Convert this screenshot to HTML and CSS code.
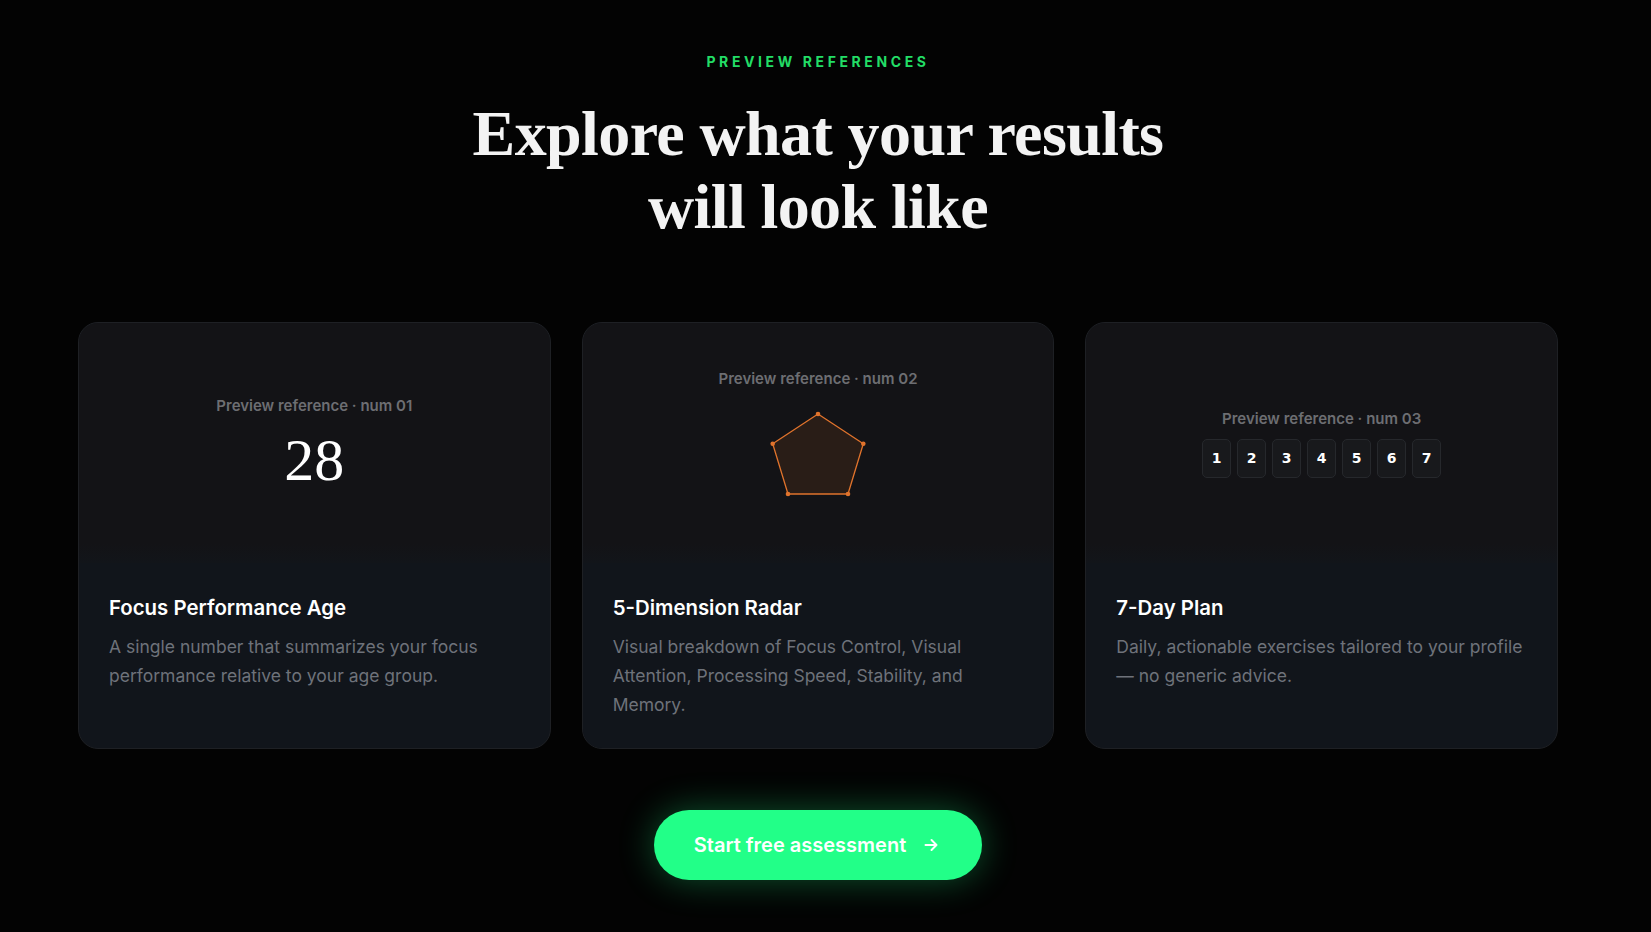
FILE: index.html
```html
<!DOCTYPE html>
<html lang="en">
<head>
<meta charset="utf-8">
<title>Preview references</title>
<link rel="stylesheet" href="styles.css">
</head>
<body>
<main class="page">
  <section class="previews">
    <p class="eyebrow">PREVIEW REFERENCES</p>
    <h1 class="headline">Explore what your results<br>will look like</h1>

    <div class="cards">
      <article class="card">
        <div class="visual">
          <p class="ref-label">Preview reference · num 01</p>
          <div class="big-number">28</div>
        </div>
        <div class="body">
          <h2 class="card-title">Focus Performance Age</h2>
          <p class="card-text">A single number that summarizes your focus performance relative to your age group.</p>
        </div>
      </article>

      <article class="card">
        <div class="visual">
          <p class="ref-label">Preview reference · num 02</p>
          <svg class="radar" width="120" height="120" viewBox="0 0 120 120" aria-hidden="true">
            <polygon points="60,17 105.3,46.7 90,97 30,97 14.7,46.7" fill="rgba(234,120,40,0.10)" stroke="#e0732c" stroke-width="1.3" stroke-linejoin="round"/>
            <circle cx="60" cy="17" r="2.3" fill="#e0732c"/>
            <circle cx="105.3" cy="46.7" r="2.3" fill="#e0732c"/>
            <circle cx="90" cy="97" r="2.3" fill="#e0732c"/>
            <circle cx="30" cy="97" r="2.3" fill="#e0732c"/>
            <circle cx="14.7" cy="46.7" r="2.3" fill="#e0732c"/>
          </svg>
        </div>
        <div class="body">
          <h2 class="card-title">5-Dimension Radar</h2>
          <p class="card-text">Visual breakdown of Focus Control, Visual Attention, Processing Speed, Stability, and Memory.</p>
        </div>
      </article>

      <article class="card">
        <div class="visual">
          <p class="ref-label">Preview reference · num 03</p>
          <div class="days">
            <span class="day">1</span>
            <span class="day">2</span>
            <span class="day">3</span>
            <span class="day">4</span>
            <span class="day">5</span>
            <span class="day">6</span>
            <span class="day">7</span>
          </div>
        </div>
        <div class="body">
          <h2 class="card-title">7-Day Plan</h2>
          <p class="card-text">Daily, actionable exercises tailored to your profile — no generic advice.</p>
        </div>
      </article>
    </div>

    <div class="cta-row">
      <a class="cta" href="#">Start free assessment
        <svg class="cta-arrow" width="18" height="18" viewBox="0 0 18 18" aria-hidden="true">
          <path d="M3.5 9h11M9.5 4l5 5-5 5" fill="none" stroke="currentColor" stroke-width="2" stroke-linecap="round" stroke-linejoin="round"/>
        </svg>
      </a>
    </div>
  </section>
</main>
</body>
</html>
```

FILE: styles.css
```css
html {
  background: #030303;
}

body {
  margin: 0;
  background: #030303;
  font-family: Inter, "Noto Sans", "Liberation Sans", sans-serif;
  color: #ffffff;
}

.page {
  min-height: 932px;
  padding-right: 15px;
}

.previews {
  padding-top: 52px;
  display: flex;
  flex-direction: column;
  align-items: center;
}

.eyebrow {
  margin: 0;
  font-size: 14px;
  line-height: 20px;
  font-weight: 700;
  letter-spacing: 3.6px;
  color: #22dd66;
}

.headline {
  margin: 25px 0 0;
  font-family: "Liberation Serif", "DejaVu Serif", serif;
  font-weight: 700;
  font-size: 64px;
  line-height: 73px;
  text-align: center;
  color: #f3f3f3;
  letter-spacing: -0.6px;
}

.cards {
  margin-top: 79px;
  width: 1480px;
  display: grid;
  grid-template-columns: repeat(3, 1fr);
  gap: 31px;
}

.card {
  border: 1px solid #1e2024;
  border-radius: 20px;
  overflow: hidden;
  background: #11151b;
  display: flex;
  flex-direction: column;
}

.visual {
  height: 240px;
  background: linear-gradient(to bottom, #131316 0%, #131316 92%, #12151a 100%);
  display: flex;
  flex-direction: column;
  align-items: center;
  justify-content: center;
}

.ref-label {
  margin: 0;
  font-size: 15px;
  line-height: 20px;
  font-weight: 600;
  color: #6d6e72;
}

.big-number {
  margin-top: 13px;
  font-family: "Liberation Serif", "DejaVu Serif", serif;
  font-size: 60px;
  line-height: 62px;
  color: #ffffff;
}

.radar {
  display: block;
  margin-top: 8px;
}

.days {
  margin-top: 10px;
  display: flex;
  gap: 6px;
}

.day {
  width: 29px;
  height: 39px;
  box-sizing: border-box;
  border: 1px solid #26282c;
  border-radius: 5px;
  background: #18191c;
  display: flex;
  align-items: center;
  justify-content: center;
  font-family: "DejaVu Sans", "Liberation Sans", sans-serif;
  font-weight: 700;
  font-size: 14px;
  color: #ffffff;
}

.body {
  padding: 32px 30px 29px;
  background: #11151b;
}

.card-title {
  margin: 0;
  font-size: 20.4px;
  line-height: 26px;
  font-weight: 600;
  color: #ffffff;
}

.card-text {
  margin: 11px 0 0;
  font-size: 17.5px;
  line-height: 29px;
  color: #6e727a;
}

.cta-row {
  margin-top: 61px;
  display: flex;
  justify-content: center;
}

.cta {
  height: 70px;
  box-sizing: border-box;
  padding: 0 42px 0 40px;
  border-radius: 35px;
  background: #22ff88;
  box-shadow: 0 0 36px rgba(34, 255, 136, 0.32);
  display: flex;
  align-items: center;
  gap: 16px;
  font-size: 20px;
  font-weight: 600;
  color: #ffffff;
  text-decoration: none;
}

.cta-arrow {
  display: block;
}
```
